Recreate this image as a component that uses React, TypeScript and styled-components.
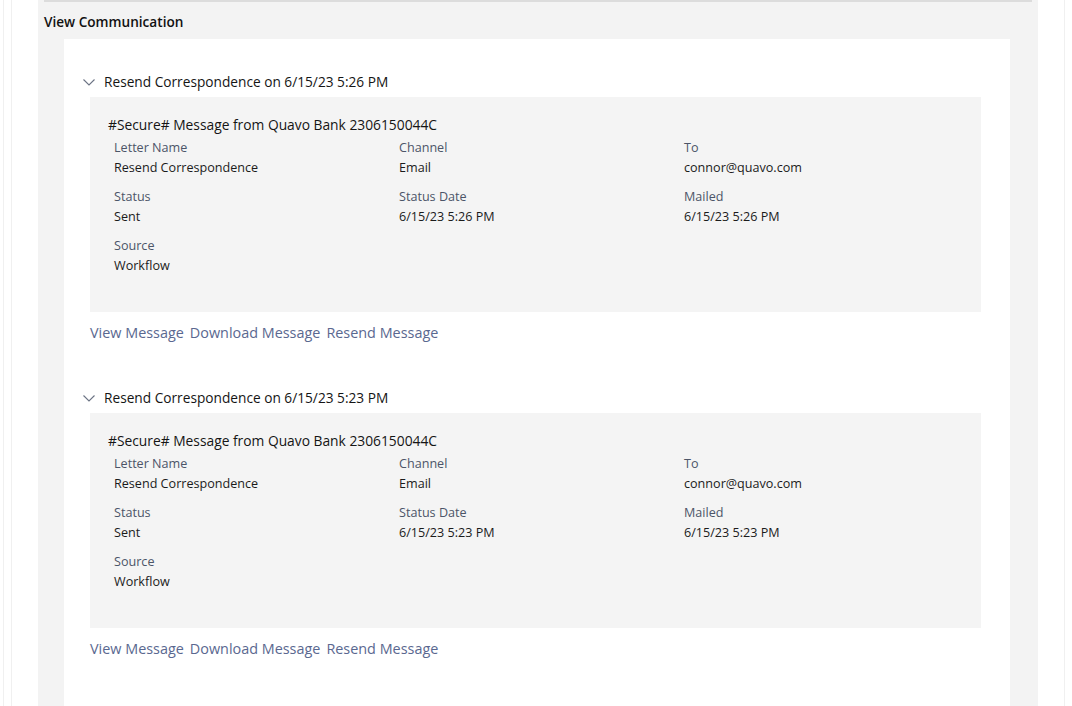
import styled, { createGlobalStyle } from "styled-components";

const GlobalStyle = createGlobalStyle`
  body {
    margin: 0;
    background: #ffffff;
    font-family: "Open Sans", "Noto Sans", sans-serif;
    color: #1b1b1b;
  }
`;

const Frame = styled.div`
  margin-left: 3px;
  width: 1062px;
  min-height: 706px;
  border-left: 1px solid #f0f0f0;
  border-right: 1px solid #f0f0f0;
  box-sizing: border-box;
`;

const Inner = styled.div`
  margin-left: 7px;
  min-height: 706px;
  padding-left: 26px;
  border-left: 1px solid #f0f0f0;
`;

const Panel = styled.section`
  width: 1000px;
  min-height: 706px;
  background: #f3f3f3;
  padding: 0 6px;
  box-sizing: border-box;
`;

const TopBar = styled.div`
  height: 2px;
  background: #dcdcdc;
`;

const PanelTitle = styled.h2`
  margin: 10px 0 7px;
  font-size: 13.6px;
  line-height: 20px;
  font-weight: 600;
  color: #111;
`;

const Card = styled.div`
  margin-left: 20px;
  width: 946px;
  min-height: 667px;
  background: #ffffff;
  padding: 33px 29px 0 26px;
  box-sizing: border-box;
  display: flex;
  flex-direction: column;
  gap: 45px;
`;

const Section = styled.div`
  display: flex;
  flex-direction: column;
`;

const Heading = styled.div`
  margin-left: -7px;
  display: flex;
  align-items: center;
  gap: 9px;
  font-size: 13.7px;
  line-height: 20px;
  color: #151515;
`;

const Detail = styled.div`
  margin-top: 5px;
  background: #f4f4f4;
  padding: 18px 18px 37px;
`;

const Subject = styled.div`
  font-size: 13.8px;
  line-height: 20px;
  color: #151515;
`;

const Fields = styled.div`
  margin: 4px 0 0 6px;
  display: grid;
  grid-template-columns: repeat(3, 285px);
  row-gap: 11px;
`;

const Field = styled.div`
  display: flex;
  flex-direction: column;
  gap: 2px;
`;

const Label = styled.span`
  font-size: 12.6px;
  line-height: 18px;
  color: #4c5568;
`;

const Value = styled.span`
  font-size: 12.6px;
  line-height: 18px;
  color: #1b1b1b;
`;

const Actions = styled.div`
  margin-top: 11px;
  display: flex;
  gap: 6px;
`;

const ActionLink = styled.a`
  font-size: 14.4px;
  line-height: 20px;
  color: #5a6890;
  cursor: pointer;
`;

const Chevron = () => (
  <svg width="12" height="7" viewBox="0 0 12 7" fill="none">
    <path d="M0.5 0.5 L6 6 L11.5 0.5" stroke="#6b7384" strokeWidth="1.1" />
  </svg>
);

interface IItem {
  time: string;
}

const items: IItem[] = [{ time: "6/15/23 5:26 PM" }, { time: "6/15/23 5:23 PM" }];

function Communication({ time }: IItem) {
  const fields = [
    ["Letter Name", "Resend Correspondence"],
    ["Channel", "Email"],
    ["To", "connor@quavo.com"],
    ["Status", "Sent"],
    ["Status Date", time],
    ["Mailed", time],
    ["Source", "Workflow"],
  ];
  return (
    <Section>
      <Heading>
        <Chevron />
        Resend Correspondence on {time}
      </Heading>
      <Detail>
        <Subject>#Secure# Message from Quavo Bank 2306150044C</Subject>
        <Fields>
          {fields.map(([label, value]) => (
            <Field key={label}>
              <Label>{label}</Label>
              <Value>{value}</Value>
            </Field>
          ))}
        </Fields>
      </Detail>
      <Actions>
        <ActionLink>View Message</ActionLink>
        <ActionLink>Download Message</ActionLink>
        <ActionLink>Resend Message</ActionLink>
      </Actions>
    </Section>
  );
}

function App() {
  return (
    <>
      <GlobalStyle />
      <Frame>
        <Inner>
          <Panel>
            <TopBar />
            <PanelTitle>View Communication</PanelTitle>
            <Card>
              {items.map((item) => (
                <Communication key={item.time} time={item.time} />
              ))}
            </Card>
          </Panel>
        </Inner>
      </Frame>
    </>
  );
}

export default App;
